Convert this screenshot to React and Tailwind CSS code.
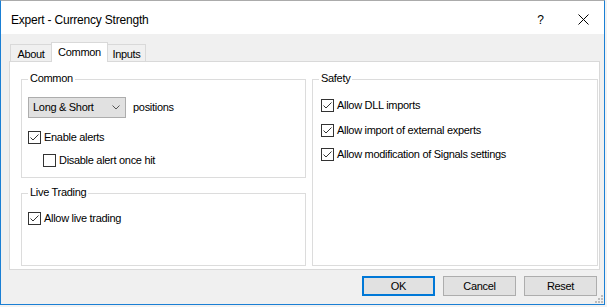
import { useState } from "react";

const font = { fontFamily: '"Liberation Sans", Arial, sans-serif' };

const Check = ({ checked, onChange }) => (
  <span
    onClick={onChange}
    className="w-[13px] h-[13px] shrink-0 border border-[#333333] bg-white flex items-center justify-center"
  >
    {checked && (
      <svg width="11" height="11" viewBox="0 0 11 11">
        <polyline points="1.5,5.5 4,8 9.5,2.5" fill="none" stroke="#333333" strokeWidth="1" />
      </svg>
    )}
  </span>
);

const CheckRow = ({ label, initial, className = "" }) => {
  const [on, setOn] = useState(initial);
  return (
    <label className={`flex items-center h-[13px] ${className}`}>
      <Check checked={on} onChange={() => setOn(!on)} />
      <span className="ml-[3px] text-[11px] leading-[13px] tracking-[-0.3px] text-black whitespace-nowrap">
        {label}
      </span>
    </label>
  );
};

const Group = ({ title, className = "", children }) => (
  <div className={`relative border border-[#dcdcdc] ${className}`}>
    <span className="absolute -top-[8px] left-[6px] px-[2px] bg-white text-[11px] leading-[13px] tracking-[-0.3px] text-black">
      {title}
    </span>
    {children}
  </div>
);

export default function App() {
  const [tab, setTab] = useState("Common");
  const tabs = [
    { name: "About", w: "w-[41px]", cls: "ml-[1px] border-l" },
    { name: "Common", w: "w-[57px]", cls: "border-l border-r" },
    { name: "Inputs", w: "w-[38px]", cls: "border-r" },
  ];

  return (
    <div className="w-[607px] h-[307px] bg-[#f2f2f2]" style={font}>
      <div className="relative w-[605px] h-[305px] border border-[#1a7fd4] border-t-[#ababab] bg-[#f0f0f0] flex flex-col">
        {/* title bar */}
        <div className="h-[33px] bg-white flex items-center pt-[4px] pl-[10px] shrink-0">
          <span className="text-[12px] tracking-[-0.2px] text-black">Expert - Currency Strength</span>
          <span className="ml-auto text-[12px] text-black mr-[34px]">?</span>
          <svg width="11" height="11" viewBox="0 0 11 11" className="mr-[15px]">
            <path d="M0.5 0.5 L10.5 10.5 M10.5 0.5 L0.5 10.5" stroke="#000" strokeWidth="1" />
          </svg>
        </div>

        <div className="pl-[8px] pr-[4px] pt-[8px] flex flex-col">
          {/* tabs */}
          <div className="h-[19px] flex items-end">
            {tabs.map((t) => {
              const sel = tab === t.name;
              return (
                <button
                  key={t.name}
                  onClick={() => setTab(t.name)}
                  className={`${t.w} ${t.cls} border-t border-[#d9d9d9] text-[11px] tracking-[-0.3px] text-black flex items-center justify-center ${
                    sel ? "h-[20px] -mb-px bg-white relative z-10" : "h-[17px] pt-[2px] bg-[#f0f0f0]"
                  }`}
                >
                  {t.name}
                </button>
              );
            })}
          </div>

          {/* panel */}
          <div className="h-[209px] border border-[#d9d9d9] bg-white flex pl-[11px]">
            <div className="w-[285px] flex flex-col">
              <Group title="Common" className="mt-[17px] h-[99px] pl-[6px] pt-[17px]">
                <div className="flex items-center">
                  <div className="w-[98px] h-[21px] bg-[#e1e1e1] border border-[#adadad] flex items-center pl-[4px] pr-[5px]">
                    <span className="text-[11px] tracking-[-0.3px] text-black">Long &amp; Short</span>
                    <svg width="8" height="5" viewBox="0 0 8 5" className="ml-auto">
                      <polyline points="0.5,0.5 4,4 7.5,0.5" fill="none" stroke="#555" strokeWidth="1" />
                    </svg>
                  </div>
                  <span className="ml-[7px] text-[11px] tracking-[-0.3px] text-black">positions</span>
                </div>
                <CheckRow label="Enable alerts" initial={true} className="mt-[13px]" />
                <CheckRow label="Disable alert once hit" initial={false} className="mt-[10px] ml-[15px]" />
              </Group>
              <Group title="Live Trading" className="mt-[15px] h-[73px] pl-[6px] pt-[18px]">
                <CheckRow label="Allow live trading" initial={true} />
              </Group>
            </div>

            <Group title="Safety" className="ml-[6px] mt-[17px] w-[286px] h-[187px] pl-[8px] pt-[19px]">
              <CheckRow label="Allow DLL imports" initial={true} />
              <CheckRow label="Allow import of external experts" initial={true} className="mt-[12px]" />
              <CheckRow label="Allow modification of Signals settings" initial={true} className="mt-[11px]" />
            </Group>
          </div>

          {/* buttons */}
          <div className="mt-[6px] flex justify-end gap-[8px] pr-[3px]">
            <button className="w-[73px] h-[20px] bg-[#e1e1e1] border-2 border-[#0078d7] text-[11px] tracking-[-0.3px] text-black">
              OK
            </button>
            <button className="w-[73px] h-[20px] bg-[#e1e1e1] border border-[#adadad] text-[11px] tracking-[-0.3px] text-black">
              Cancel
            </button>
            <button className="w-[73px] h-[20px] bg-[#e1e1e1] border border-[#adadad] text-[11px] tracking-[-0.3px] text-black">
              Reset
            </button>
          </div>
        </div>

        {/* size grip */}
        <svg width="8" height="8" viewBox="0 0 8 8" className="absolute right-[1px] bottom-[1px]">
          <rect x="6" y="0" width="2" height="2" fill="#bcbcbc" />
          <rect x="3" y="3" width="2" height="2" fill="#bcbcbc" />
          <rect x="6" y="3" width="2" height="2" fill="#bcbcbc" />
          <rect x="0" y="6" width="2" height="2" fill="#bcbcbc" />
          <rect x="3" y="6" width="2" height="2" fill="#bcbcbc" />
          <rect x="6" y="6" width="2" height="2" fill="#bcbcbc" />
        </svg>
      </div>
    </div>
  );
}
